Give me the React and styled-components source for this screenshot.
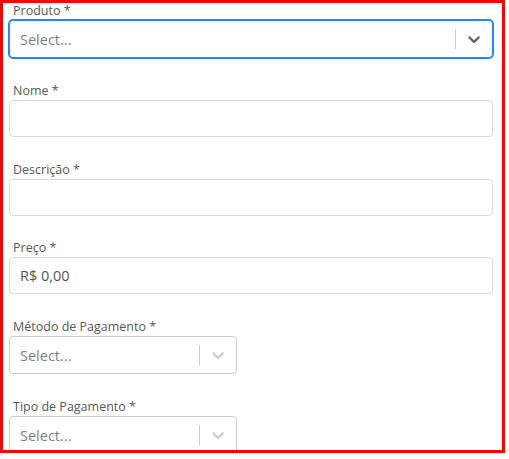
import React from "react";
import styled, { createGlobalStyle, css } from "styled-components";

const GlobalStyle = createGlobalStyle`
  body {
    margin: 0;
    background: #fff;
    font-family: "Open Sans", "Noto Sans", sans-serif;
  }
`;

const Frame = styled.div`
  width: 505px;
  height: 453px;
  box-sizing: border-box;
  border: 3px solid #ff0000;
  overflow: hidden;
`;

const Form = styled.form`
  display: flex;
  flex-direction: column;
  gap: 24.75px;
  padding: 0 9px 0 6px;
`;

const Field = styled.div`
  display: flex;
  flex-direction: column;
  width: ${(p) => p.width || "100%"};
`;

const Label = styled.label`
  font-size: 12.5px;
  line-height: 15px;
  color: #585858;
  margin: 0 0 2px 4px;
`;

const Input = styled.input`
  box-sizing: border-box;
  height: 37px;
  width: 100%;
  border: 1px solid #dadada;
  border-radius: 4px;
  padding: 0 10px;
  font-family: inherit;
  font-size: 14.5px;
  color: #555555;
  outline: none;
`;

const Control = styled.div`
  box-sizing: border-box;
  display: flex;
  align-items: center;
  min-height: 38px;
  border: 1px solid #cccccc;
  border-radius: 4px;
  background: #fff;
  ${(p) =>
    p.focused &&
    css`
      border-color: #2684ff;
      box-shadow: 0 0 0 1px #2684ff;
    `}
`;

const ValueBox = styled.div`
  flex: 1;
  padding: 2px 8px;
`;

const Placeholder = styled.span`
  margin: 0 2px;
  font-size: 14.5px;
  color: #808080;
`;

const Separator = styled.span`
  align-self: stretch;
  width: 1px;
  margin: 8px 0;
  background: #cccccc;
`;

const Indicator = styled.div`
  display: flex;
  padding: 8px;
  color: ${(p) => (p.focused ? "#666666" : "#cccccc")};
`;

function Chevron() {
  return (
    <svg width="20" height="20" viewBox="0 0 20 20" fill="currentColor" aria-hidden="true">
      <path d="M4.516 7.548c0.436-0.446 1.043-0.481 1.576 0l3.908 3.747 3.908-3.747c0.533-0.481 1.141-0.446 1.574 0 0.436 0.445 0.408 1.197 0 1.615-0.406 0.418-4.695 4.502-4.695 4.502-0.217 0.223-0.502 0.335-0.787 0.335s-0.57-0.112-0.789-0.335c0 0-4.287-4.084-4.695-4.502s-0.436-1.17 0-1.615z" />
    </svg>
  );
}

function Select({ focused }) {
  return (
    <Control focused={focused}>
      <ValueBox>
        <Placeholder>Select...</Placeholder>
      </ValueBox>
      <Separator />
      <Indicator focused={focused}>
        <Chevron />
      </Indicator>
    </Control>
  );
}

export default function App() {
  return (
    <>
      <GlobalStyle />
      <Frame>
        <Form>
          <Field>
            <Label>Produto *</Label>
            <Select focused />
          </Field>
          <Field>
            <Label>Nome *</Label>
            <Input type="text" />
          </Field>
          <Field>
            <Label>Descrição *</Label>
            <Input type="text" />
          </Field>
          <Field>
            <Label>Preço *</Label>
            <Input type="text" defaultValue="R$ 0,00" />
          </Field>
          <Field width="228px">
            <Label>Método de Pagamento *</Label>
            <Select />
          </Field>
          <Field width="228px">
            <Label>Tipo de Pagamento *</Label>
            <Select />
          </Field>
        </Form>
      </Frame>
    </>
  );
}
